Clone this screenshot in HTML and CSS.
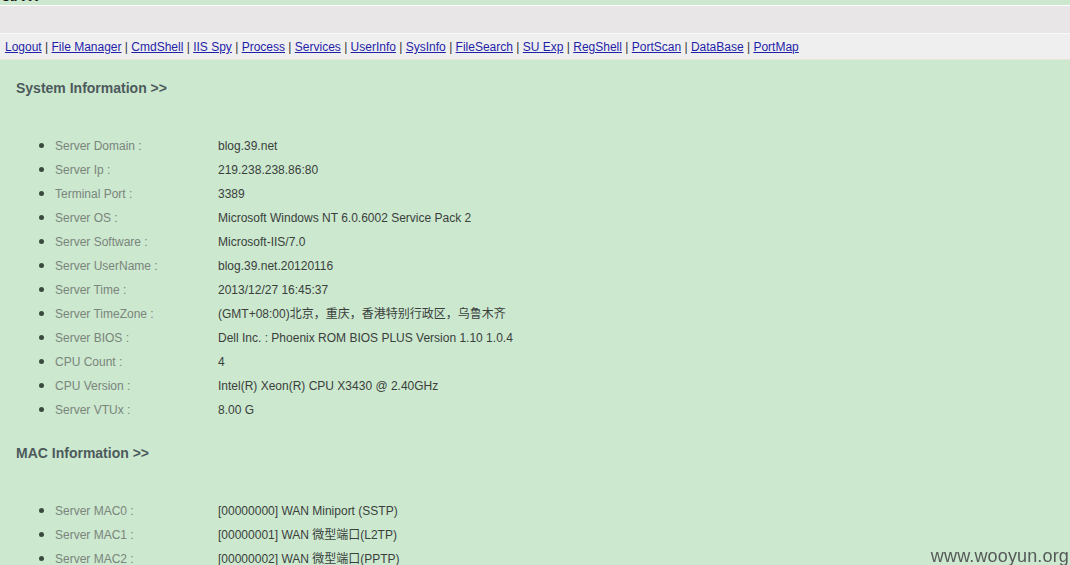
FILE: index.html
```html
<!DOCTYPE html>
<html lang="zh-CN">
<head>
<meta charset="utf-8">
<title>SysInfo</title>
<link rel="stylesheet" href="styles.css">
</head>
<body>
<div class="topstrip"><p class="toptext">Sa 000</p></div>
<div class="bar"></div>
<div class="nav">
  <a href="#">Logout</a> | <a href="#">File Manager</a> | <a href="#">CmdShell</a> | <a href="#">IIS Spy</a> | <a href="#">Process</a> | <a href="#">Services</a> | <a href="#">UserInfo</a> | <a href="#">SysInfo</a> | <a href="#">FileSearch</a> | <a href="#">SU Exp</a> | <a href="#">RegShell</a> | <a href="#">PortScan</a> | <a href="#">DataBase</a> | <a href="#">PortMap</a>
</div>
<div class="content">
  <h2 class="head">System Information &gt;&gt;</h2>
  <ul class="info">
    <li><span class="label">Server Domain :</span><span class="val">blog.39.net</span></li>
    <li><span class="label">Server Ip :</span><span class="val">219.238.238.86:80</span></li>
    <li><span class="label">Terminal Port :</span><span class="val">3389</span></li>
    <li><span class="label">Server OS :</span><span class="val">Microsoft Windows NT 6.0.6002 Service Pack 2</span></li>
    <li><span class="label">Server Software :</span><span class="val">Microsoft-IIS/7.0</span></li>
    <li><span class="label">Server UserName :</span><span class="val">blog.39.net.20120116</span></li>
    <li><span class="label">Server Time :</span><span class="val">2013/12/27 16:45:37</span></li>
    <li><span class="label">Server TimeZone :</span><span class="val">(GMT+08:00)北京，重庆，香港特别行政区，乌鲁木齐</span></li>
    <li><span class="label">Server BIOS :</span><span class="val">Dell Inc. : Phoenix ROM BIOS PLUS Version 1.10 1.0.4</span></li>
    <li><span class="label">CPU Count :</span><span class="val">4</span></li>
    <li><span class="label">CPU Version :</span><span class="val">Intel(R) Xeon(R) CPU X3430 @ 2.40GHz</span></li>
    <li><span class="label">Server VTUx :</span><span class="val">8.00 G</span></li>
  </ul>
  <h2 class="head">MAC Information &gt;&gt;</h2>
  <ul class="info">
    <li><span class="label">Server MAC0 :</span><span class="val">[00000000] WAN Miniport (SSTP)</span></li>
    <li><span class="label">Server MAC1 :</span><span class="val">[00000001] WAN 微型端口(L2TP)</span></li>
    <li><span class="label">Server MAC2 :</span><span class="val">[00000002] WAN 微型端口(PPTP)</span></li>
  </ul>
</div>
<div class="watermark">www.wooyun.org</div>
</body>
</html>
```
FILE: styles.css
```css
html, body {
  margin: 0;
  padding: 0;
  height: 100%;
  overflow: hidden;
}
body {
  background: #cce8cf;
  font-family: "Liberation Sans", Arial, "Noto Sans CJK SC", sans-serif;
  font-size: 12px;
  color: #333;
}
.topstrip {
  height: 5px;
  overflow: hidden;
}
.toptext {
  margin: -9px 0 0 2px;
  font-size: 12px;
  line-height: 12px;
  color: #000;
}
.bar {
  height: 27px;
  border-top: 1px solid #ffffff;
  background: #e8e6e7;
}
.nav {
  height: 25px;
  line-height: 26px;
  padding-left: 5px;
  border-top: 1px solid #fbfafb;
  border-bottom: 1px solid #e9e4dc;
  background: #f0eff0;
  color: #333;
  font-size: 12px;
  white-space: nowrap;
}
.nav a {
  color: #1f1fa8;
  text-decoration: underline;
}
.content {
  padding: 19px 0 0 16px;
}
.head {
  margin: 0;
  font-size: 14px;
  line-height: 18px;
  font-weight: bold;
  color: #4c5a5c;
}
.info {
  margin: 36px 0 23px 0;
  padding-left: 39px;
  list-style: disc;
  color: #333;
}
.info li {
  line-height: 24px;
  height: 24px;
  white-space: nowrap;
}
.info li::marker {
  color: #3a4a40;
  font-size: 15px;
}
.label {
  display: inline-block;
  width: 163px;
  color: #7a857c;
}
.val {
  color: #3a3f3c;
}
.watermark {
  position: fixed;
  right: 1px;
  bottom: -1px;
  font-size: 18px;
  line-height: 20px;
  color: #555a58;
  letter-spacing: 0.15px;
}
```
